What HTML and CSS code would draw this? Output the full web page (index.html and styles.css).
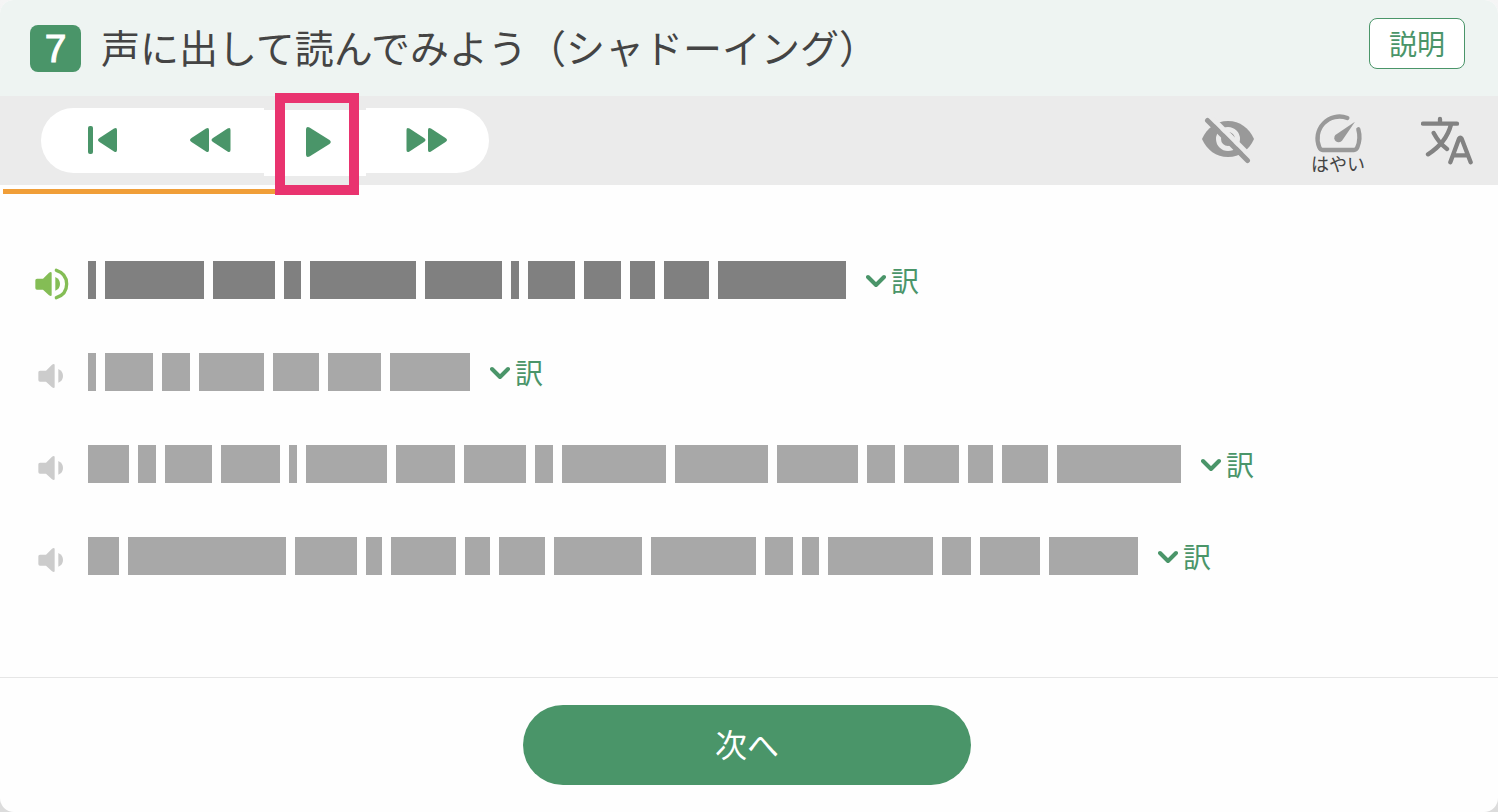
FILE: index.html
```html
<!DOCTYPE html>
<html lang="ja">
<head>
    <meta charset="UTF-8">
    <meta name="viewport" content="width=device-width, initial-scale=1.0">
    <title>シャドーイング</title>
    <link rel="stylesheet" href="styles.css">
</head>
<body>

    <div class="card">
        <header class="head">
            <span class="number">7</span>
            <h1>声に出して読んでみよう（シャドーイング）</h1>
            <button type="button" class="help">説明</button>
        </header>

        <div class="toolbar">
            <div class="player">
                <button type="button" class="ctrl" aria-label="最初から">
                    <svg width="32" height="30" viewBox="0 0 32 30">
                        <rect x="1" y="1" width="5" height="28" rx="2"/>
                        <path d="M12.5 13 27 3.500Q30 2 30 5V25Q30 28 27 26.500L12.500 17Q9.500 15 12.500 13z"/>
                    </svg>
                </button>
                <button type="button" class="ctrl" aria-label="早戻し">
                    <svg width="42" height="30" viewBox="0 0 42 30">
                        <path d="M2.500 13 17 3.500Q20 2 20 5V25Q20 28 17 26.500L2.500 17Q-.5 15 2.500 13z"/>
                        <path d="M24 13 38.500 3.500Q41.500 2 41.500 5V25Q41.500 28 38.500 26.500L24 17Q21 15 24 13z"/>
                    </svg>
                </button>
                <button type="button" class="ctrl play" aria-label="再生">
                    <svg width="27" height="32" viewBox="0 0 27 32">
                        <path d="M1 4Q1 0 4.500 1.500L24.500 14Q27 16 24.500 18L4.500 30.500Q1 32 1 28z"/>
                    </svg>
                    <span class="marker"></span>
                </button>
                <button type="button" class="ctrl forward" aria-label="早送り">
                    <svg width="42" height="30" viewBox="0 0 42 30">
                        <path d="M18 13 3.500 3.500Q.5 2 .5 5V25Q.5 28 3.500 26.500L18 17Q21 15 18 13z"/>
                        <path d="M39.500 13 25 3.500Q22 2 22 5V25Q22 28 25 26.500L39.500 17Q42.500 15 39.500 13z"/>
                    </svg>
                </button>
            </div>

            <div class="tools">
                <button type="button" class="tool" aria-label="文字を隠す">
                    <svg width="54" height="48" viewBox="0 0 54 48">
                        <path d="M1 22C6 11 15 4 27 4S48 11 53 22C48 33 39 40 27 40S6 33 1 22z" fill="#999"/>
                        <circle cx="27" cy="22" r="9.500" fill="none" stroke="#ebebeb" stroke-width="5"/>
                        <path d="M27 16Q31 16.500 32.500 21" fill="none" stroke="#ebebeb" stroke-width="1"/>
                        <path d="M9 -1 53 43" stroke="#ebebeb" stroke-width="5"/>
                        <path d="M6.500 3.500 46.500 43.500" stroke="#999" stroke-width="5" stroke-linecap="round"/>
                    </svg>
                </button>
                <button type="button" class="tool speed">
                    <svg width="54" height="42" viewBox="35 25 162 126" fill="none" stroke="#999" stroke-width="13" stroke-linecap="round" stroke-linejoin="round">
                        <path d="M144 43A66 66 0 0 0 60 131Q63 139 70 139H164Q171 139 174 131Q185 105 177 77"/>
                        <path d="M167 54 128 111A12 12 0 1 1 108 94z" fill="#999" stroke="none"/>
                    </svg>
                    はやい
                </button>
                <button type="button" class="tool" aria-label="翻訳">
                    <svg width="52" height="50" viewBox="362 30 156 150" fill="none" stroke="#828282" stroke-width="13" stroke-linecap="round" stroke-linejoin="round">
                        <path d="M368 53H470M419 39V50M452 56C442 94 418 123 383 145M400 81C410 100 424 117 440 129"/>
                        <path d="M450 169 476 98Q480 92 484 98L511 169M462 148H499"/>
                    </svg>
                </button>
            </div>
        </div>

        <main>
            <div class="progress"></div>
            <ul class="lines" id="lines"></ul>
        </main>

        <footer>
            <button type="button" class="next">次へ</button>
        </footer>
    </div>

    <script>
        // 各行の単語の幅
        var lines = [
            [8, 99, 62, 17, 106, 77, 8, 47, 37, 25, 45, 128],
            [8, 48, 28, 65, 46, 53, 80],
            [41, 18, 47, 59, 8, 81, 59, 62, 18, 104, 93, 81, 28, 55, 25, 46, 124],
            [31, 158, 62, 16, 65, 25, 46, 88, 105, 28, 17, 105, 29, 60, 89]
        ];
        var current = 0;

        var html = "";
        for (var i = 0; i < lines.length; i++) {
            var active = i == current;
            html += '<li class="line' + (active ? ' active' : '') + '">';
            html += '<button type="button" class="speaker" aria-label="音声">';
            html += '<svg width="35" height="34" viewBox="' + (active ? '102' : '93') + ' 82 105 102">';
            html += '<path d="M106 122Q106 117 111 117H129L147 99Q155 94 155 101V165Q155 172 147 167L129 150H111Q106 150 106 145z"/>';
            html += '<path d="M166 112Q180 118 180 133T166 153z"/>';
            if (active) {
                html += '<path class="wave" d="M169 92C188 98 200 113 200 133S188 168 169 174"/>';
            }
            html += '</svg></button><span class="words">';
            for (var j = 0; j < lines[i].length; j++) {
                html += '<span class="word" style="width:' + lines[i][j] + 'px"></span>';
            }
            html += '</span><button type="button" class="trans">';
            html += '<svg width="20" height="16" viewBox="0 0 20 16"><path d="M2 5 10 13 18 5"/></svg>訳</button></li>';
        }
        document.getElementById("lines").innerHTML = html;
    </script>
</body>
</html>
```
FILE: styles.css
```css
*{
    margin: 0;
    padding: 0;
    box-sizing: border-box;
}
body{
    font-family: "Noto Sans CJK JP", sans-serif;
    color: #444;
    background: linear-gradient(#f5f5f5, #dcdcdc);
}
button{
    font-family: inherit;
    border: none;
    background: none;
    cursor: pointer;
}
svg{
    display: block;
    flex-shrink: 0;
}
.card{
    display: flex;
    flex-direction: column;
    min-height: 100vh;
    background: #fefefe;
    border-radius: 14px;
    overflow: hidden;
}

/* header */
.head{
    display: flex;
    align-items: center;
    height: 96px;
    padding: 0 33px 0 30px;
    background: #eef4f2;
}
.number{
    width: 51px;
    height: 47px;
    margin-right: 20px;
    border-radius: 8px;
    background: #4a9569;
    color: #fff;
    font-family: "Liberation Sans", sans-serif;
    font-size: 39px;
    line-height: 48px;
    text-align: center;
    -webkit-text-stroke: 1px #fff;
}
h1{
    padding-bottom: 5px;
    font-size: 39px;
    font-weight: 400;
    line-height: 48px;
}
.help{
    width: 96px;
    height: 51px;
    margin: 0 0 10px auto;
    border: 1px solid #4a9569;
    border-radius: 8px;
    background: #fff;
    color: #4a9569;
    font-size: 28px;
    line-height: 48px;
}

/* toolbar */
.toolbar{
    display: flex;
    align-items: center;
    justify-content: space-between;
    height: 89px;
    padding: 0 25px 0 41px;
    background: #ebebeb;
}
.player{
    display: flex;
    align-items: center;
    width: 448px;
    height: 65px;
    padding-left: 9px;
    border-radius: 33px;
    background: #fff;
    fill: #4a9569;
}
.ctrl{
    display: flex;
    align-items: center;
    justify-content: center;
    width: 107px;
    height: 65px;
    padding: 0 2px 2px 0;
}
.play{
    position: relative;
    width: 102px;
    height: 66px;
    margin-top: 5px;
    padding: 0 0 2px 6px;
    background: #fff;
    box-shadow: 0 -3px 0 #ebebeb;
}
.marker{
    position: absolute;
    top: -17px;
    left: 11px;
    width: 84px;
    height: 102px;
    border: 10px solid #e9336f;
}
.forward{
    flex: 1;
}
.tools{
    display: flex;
    align-items: center;
    gap: 56px;
}
.speed{
    padding-top: 2px;
    color: #444;
    font-size: 18px;
    line-height: 18px;
    white-space: nowrap;
}

/* lines */
main{
    flex: 1;
}
.progress{
    width: 20%;
    height: 5px;
    margin: 4px 0 0 3px;
    background: #f09e38;
}
.lines{
    padding: 67px 34px 0;
    list-style: none;
}
.line{
    display: flex;
    align-items: center;
    height: 38px;
    margin-bottom: 54px;
}
.speaker{
    width: 54px;
    padding-top: 8px;
    fill: #ccc;
}
.words{
    display: flex;
    gap: 9px;
}
.word{
    height: 38px;
    background: #a8a8a8;
}
.active .speaker{
    fill: #84bd55;
}
.active .word{
    background: #808080;
}
.wave{
    fill: none;
    stroke: #84bd55;
    stroke-width: 10;
    stroke-linecap: round;
}
.trans{
    display: flex;
    align-items: center;
    gap: 5px;
    margin-left: 20px;
    color: #4a9569;
    font-size: 28px;
    line-height: 38px;
}
.trans path{
    fill: none;
    stroke: #4a9569;
    stroke-width: 4;
    stroke-linecap: round;
    stroke-linejoin: round;
}

/* footer */
footer{
    padding: 27px 4px 27px 0;
    border-top: 1px solid #e6e6e6;
    text-align: center;
}
.next{
    width: 30%;
    height: 80px;
    padding-bottom: 4px;
    border-radius: 40px;
    background: #4a9569;
    color: #fff;
    font-size: 32px;
    vertical-align: top;
}
```
